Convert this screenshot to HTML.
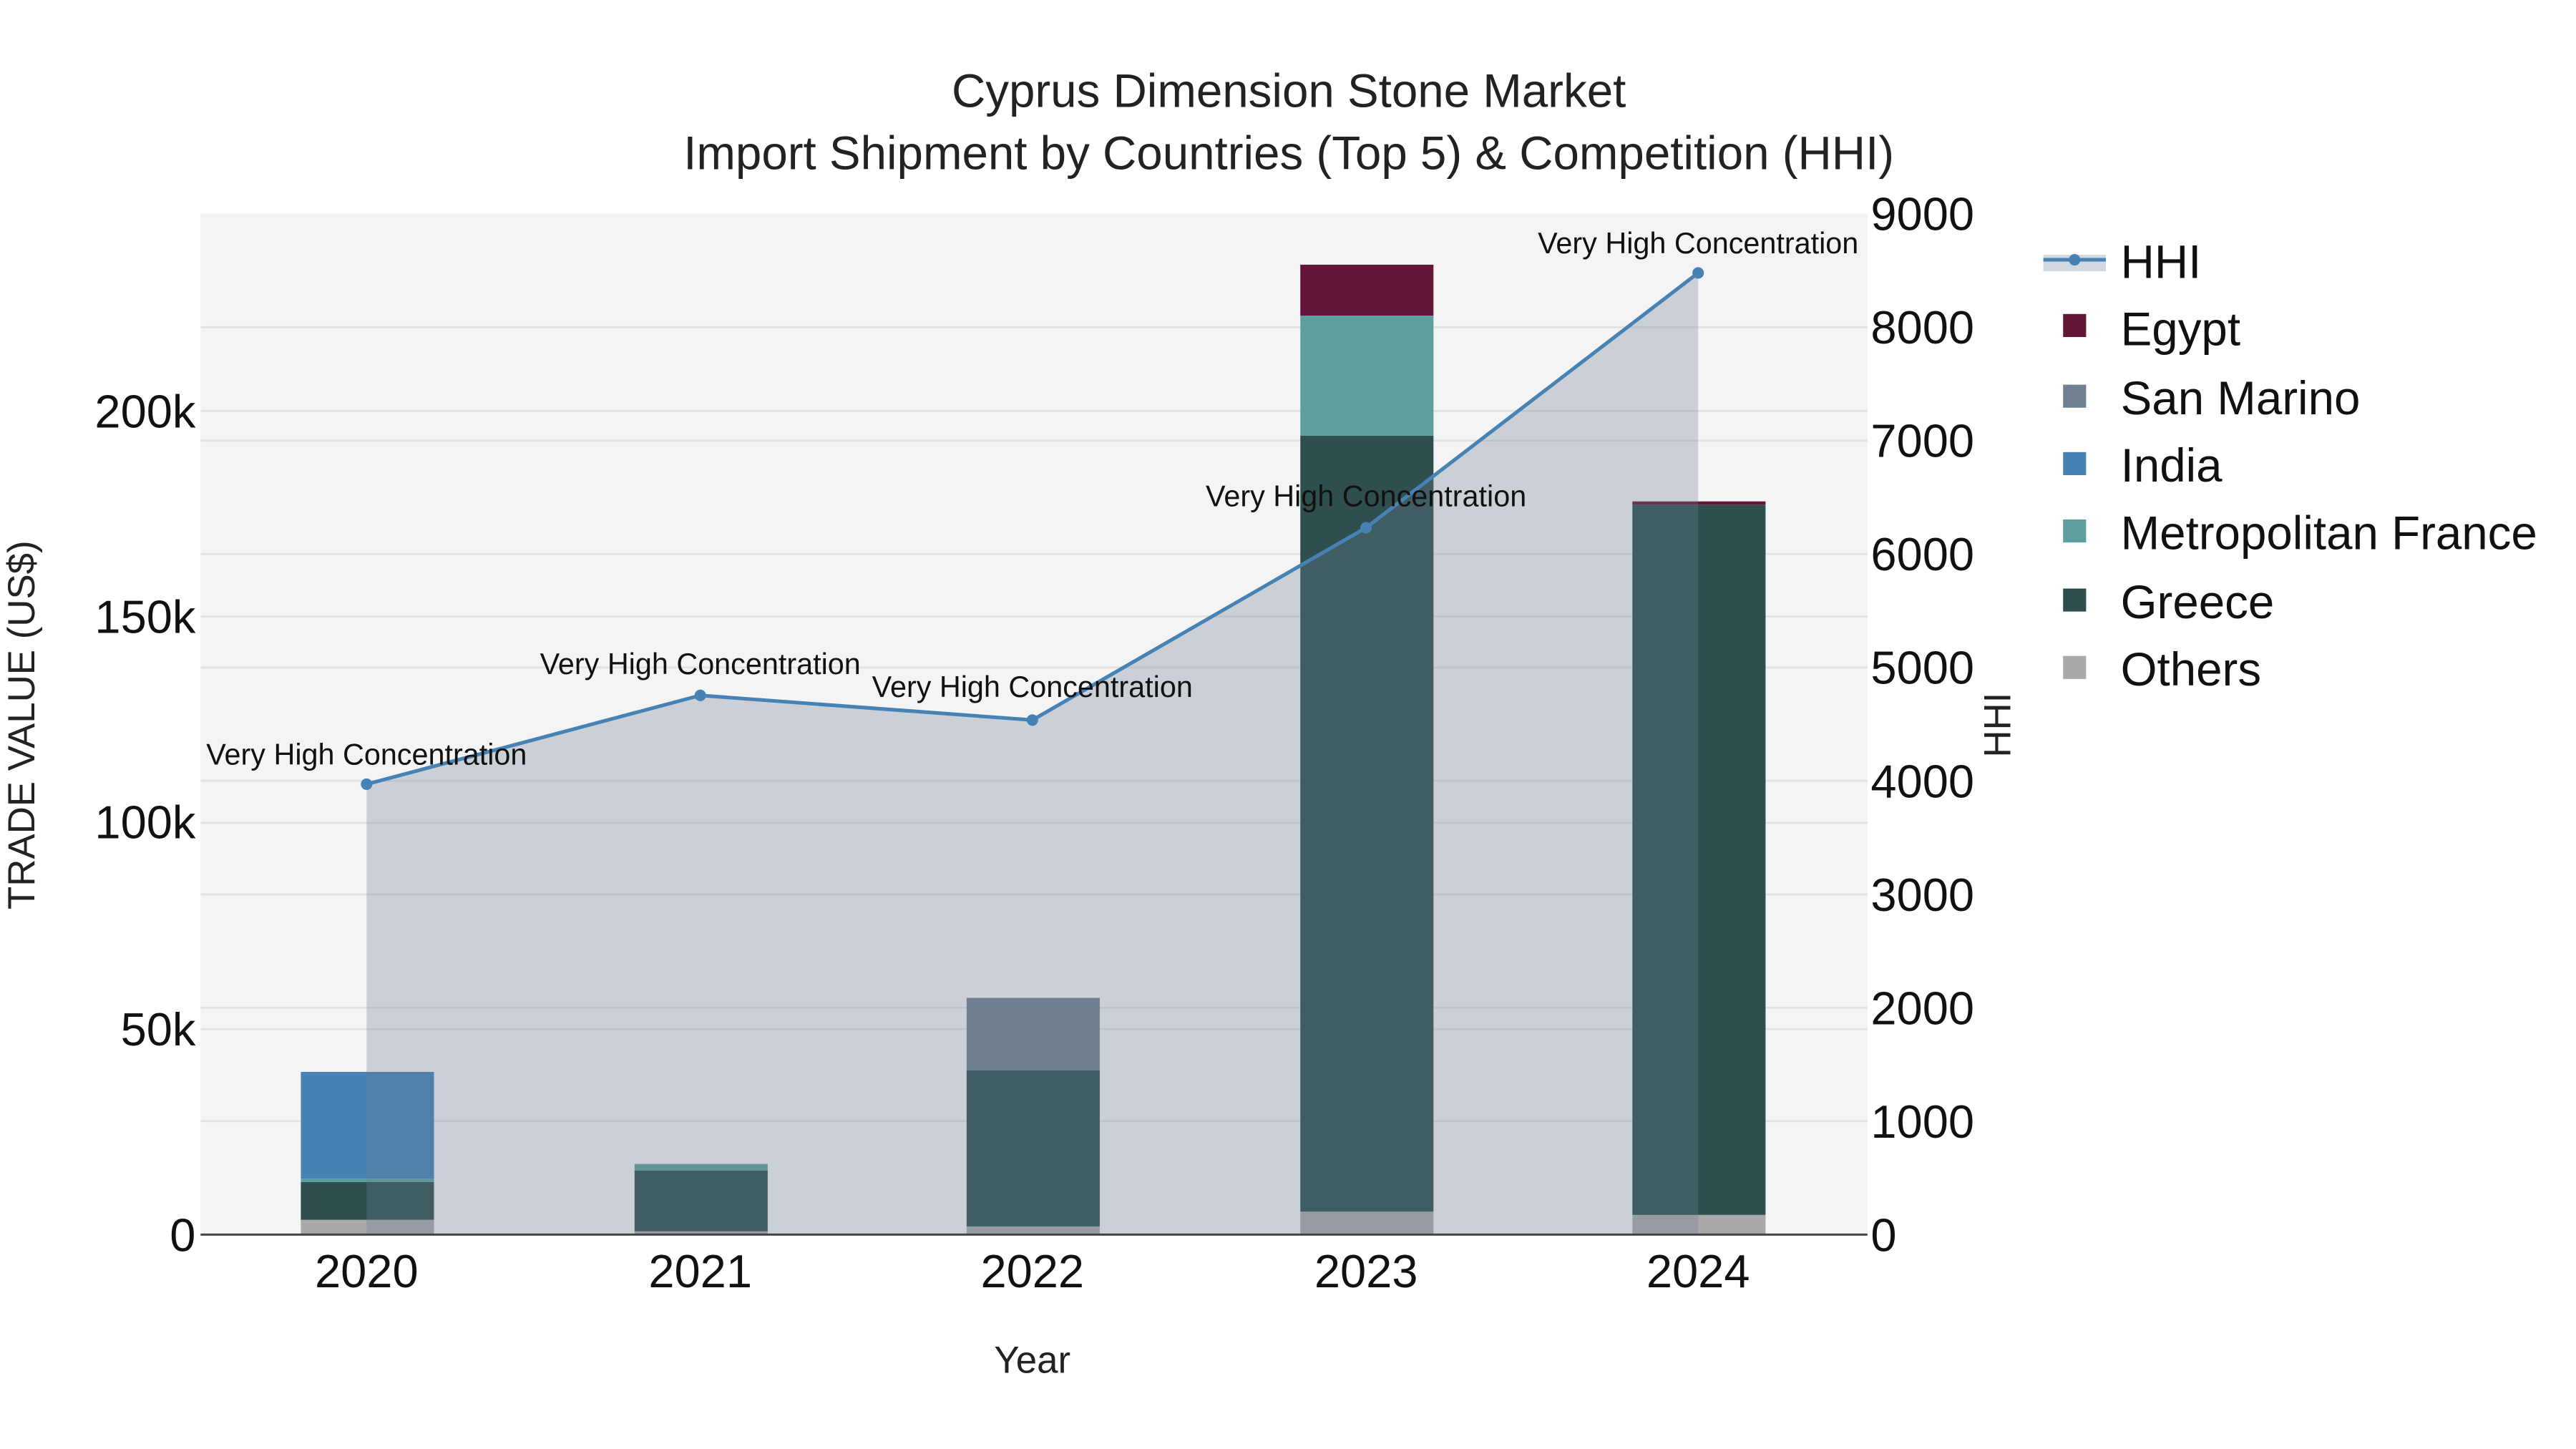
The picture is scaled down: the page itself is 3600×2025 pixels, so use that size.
<!DOCTYPE html>
<html><head><meta charset="utf-8"><style>html,body{margin:0;padding:0;background:#fff}svg{display:block}</style></head>
<body>
<svg width="3600" height="2025" viewBox="0 0 1567 881.4" preserveAspectRatio="none" xmlns="http://www.w3.org/2000/svg" font-family="Liberation Sans, sans-serif">
<rect width="1567" height="881.4" fill="#fff"/>
<rect x="122" y="130" width="1014" height="621" fill="#f4f4f4"/>
<g stroke="#e2e2e2" stroke-width="1.2">
<line x1="122" x2="1136" y1="626" y2="626"/><line x1="122" x2="1136" y1="500.5" y2="500.5"/><line x1="122" x2="1136" y1="375" y2="375"/><line x1="122" x2="1136" y1="250" y2="250"/>
<line x1="122" x2="1136" y1="682" y2="682"/><line x1="122" x2="1136" y1="613" y2="613"/><line x1="122" x2="1136" y1="544" y2="544"/><line x1="122" x2="1136" y1="475" y2="475"/><line x1="122" x2="1136" y1="406" y2="406"/><line x1="122" x2="1136" y1="337" y2="337"/><line x1="122" x2="1136" y1="268" y2="268"/><line x1="122" x2="1136" y1="199" y2="199"/>
</g>
<rect x="183" y="742" width="81" height="9" fill="#a9a9a9"/>
<rect x="183" y="719" width="81" height="23" fill="#2f4f4f"/>
<rect x="183" y="717" width="81" height="2" fill="#5f9ea0"/>
<rect x="183" y="652" width="81" height="65" fill="#4682b4"/>
<rect x="386" y="749" width="81" height="2" fill="#a9a9a9"/>
<rect x="386" y="712" width="81" height="37" fill="#2f4f4f"/>
<rect x="386" y="708" width="81" height="4" fill="#5f9ea0"/>
<rect x="588" y="746" width="81" height="5" fill="#a9a9a9"/>
<rect x="588" y="651" width="81" height="95" fill="#2f4f4f"/>
<rect x="588" y="607" width="81" height="44" fill="#708090"/>
<rect x="791" y="737" width="81" height="14" fill="#a9a9a9"/>
<rect x="791" y="265" width="81" height="472" fill="#2f4f4f"/>
<rect x="791" y="192" width="81" height="73" fill="#5f9ea0"/>
<rect x="791" y="161" width="81" height="31" fill="#641638"/>
<rect x="993" y="739" width="81" height="12" fill="#a9a9a9"/>
<rect x="993" y="307" width="81" height="432" fill="#2f4f4f"/>
<rect x="993" y="305" width="81" height="2" fill="#641638"/>
<path d="M223,751 L223,477 L426,423 L628,438 L831,321 L1033,166 L1033,751 Z" fill="rgba(110,125,150,0.3)"/>
<polyline points="223,477 426,423 628,438 831,321 1033,166" fill="none" stroke="#4682b4" stroke-width="2.2"/>
<g fill="#4682b4"><circle cx="223" cy="477" r="3.5"/><circle cx="426" cy="423" r="3.5"/><circle cx="628" cy="438" r="3.5"/><circle cx="831" cy="321" r="3.5"/><circle cx="1033" cy="166" r="3.5"/></g>
<line x1="122" x2="1136" y1="751" y2="751" stroke="#444" stroke-width="1.3"/>
<g font-size="18" text-anchor="middle" fill="#111">
<text x="223" y="465">Very High Concentration</text>
<text x="426" y="410">Very High Concentration</text>
<text x="628" y="424">Very High Concentration</text>
<text x="831" y="308">Very High Concentration</text>
<text x="1033" y="154">Very High Concentration</text>
</g>
<g font-size="28.5" text-anchor="middle" fill="#222">
<text x="784" y="65">Cyprus Dimension Stone Market</text>
<text x="784" y="103">Import Shipment by Countries (Top 5) &amp; Competition (HHI)</text>
</g>
<g font-size="28.3" text-anchor="end" fill="#111">
<text x="119" y="761">0</text><text x="119" y="636">50k</text><text x="119" y="510">100k</text><text x="119" y="385">150k</text><text x="119" y="260">200k</text>
</g>
<g font-size="28.3" fill="#111">
<text x="1138" y="761">0</text><text x="1138" y="692">1000</text><text x="1138" y="623">2000</text><text x="1138" y="554">3000</text><text x="1138" y="485">4000</text><text x="1138" y="416">5000</text><text x="1138" y="347">6000</text><text x="1138" y="278">7000</text><text x="1138" y="209">8000</text><text x="1138" y="140">9000</text>
</g>
<g font-size="28.3" text-anchor="middle" fill="#111">
<text x="223" y="783">2020</text><text x="426" y="783">2021</text><text x="628" y="783">2022</text><text x="831" y="783">2023</text><text x="1033" y="783">2024</text>
</g>
<text x="628" y="835" font-size="23" text-anchor="middle" fill="#222">Year</text>
<text transform="translate(21,441) rotate(-90)" font-size="23" text-anchor="middle" fill="#222">TRADE VALUE (US$)</text>
<text transform="translate(1223,441) rotate(-90)" font-size="23" text-anchor="middle" fill="#222">HHI</text>
<rect x="1243" y="155" width="38" height="10" fill="rgba(110,125,150,0.3)"/>
<line x1="1243" x2="1281" y1="158" y2="158" stroke="#4682b4" stroke-width="2.2"/>
<circle cx="1262" cy="158" r="3.5" fill="#4682b4"/>
<rect x="1255" y="191" width="14" height="14" fill="#641638"/>
<rect x="1255" y="234" width="14" height="14" fill="#708090"/>
<rect x="1255" y="275" width="14" height="14" fill="#4682b4"/>
<rect x="1255" y="316" width="14" height="14" fill="#5f9ea0"/>
<rect x="1255" y="358" width="14" height="14" fill="#2f4f4f"/>
<rect x="1255" y="399" width="14" height="14" fill="#a9a9a9"/>
<g font-size="28.5" fill="#111">
<text x="1290" y="169">HHI</text><text x="1290" y="210">Egypt</text><text x="1290" y="252">San Marino</text><text x="1290" y="293">India</text><text x="1290" y="334">Metropolitan France</text><text x="1290" y="376">Greece</text><text x="1290" y="417">Others</text>
</g>
</svg>
</body></html>
